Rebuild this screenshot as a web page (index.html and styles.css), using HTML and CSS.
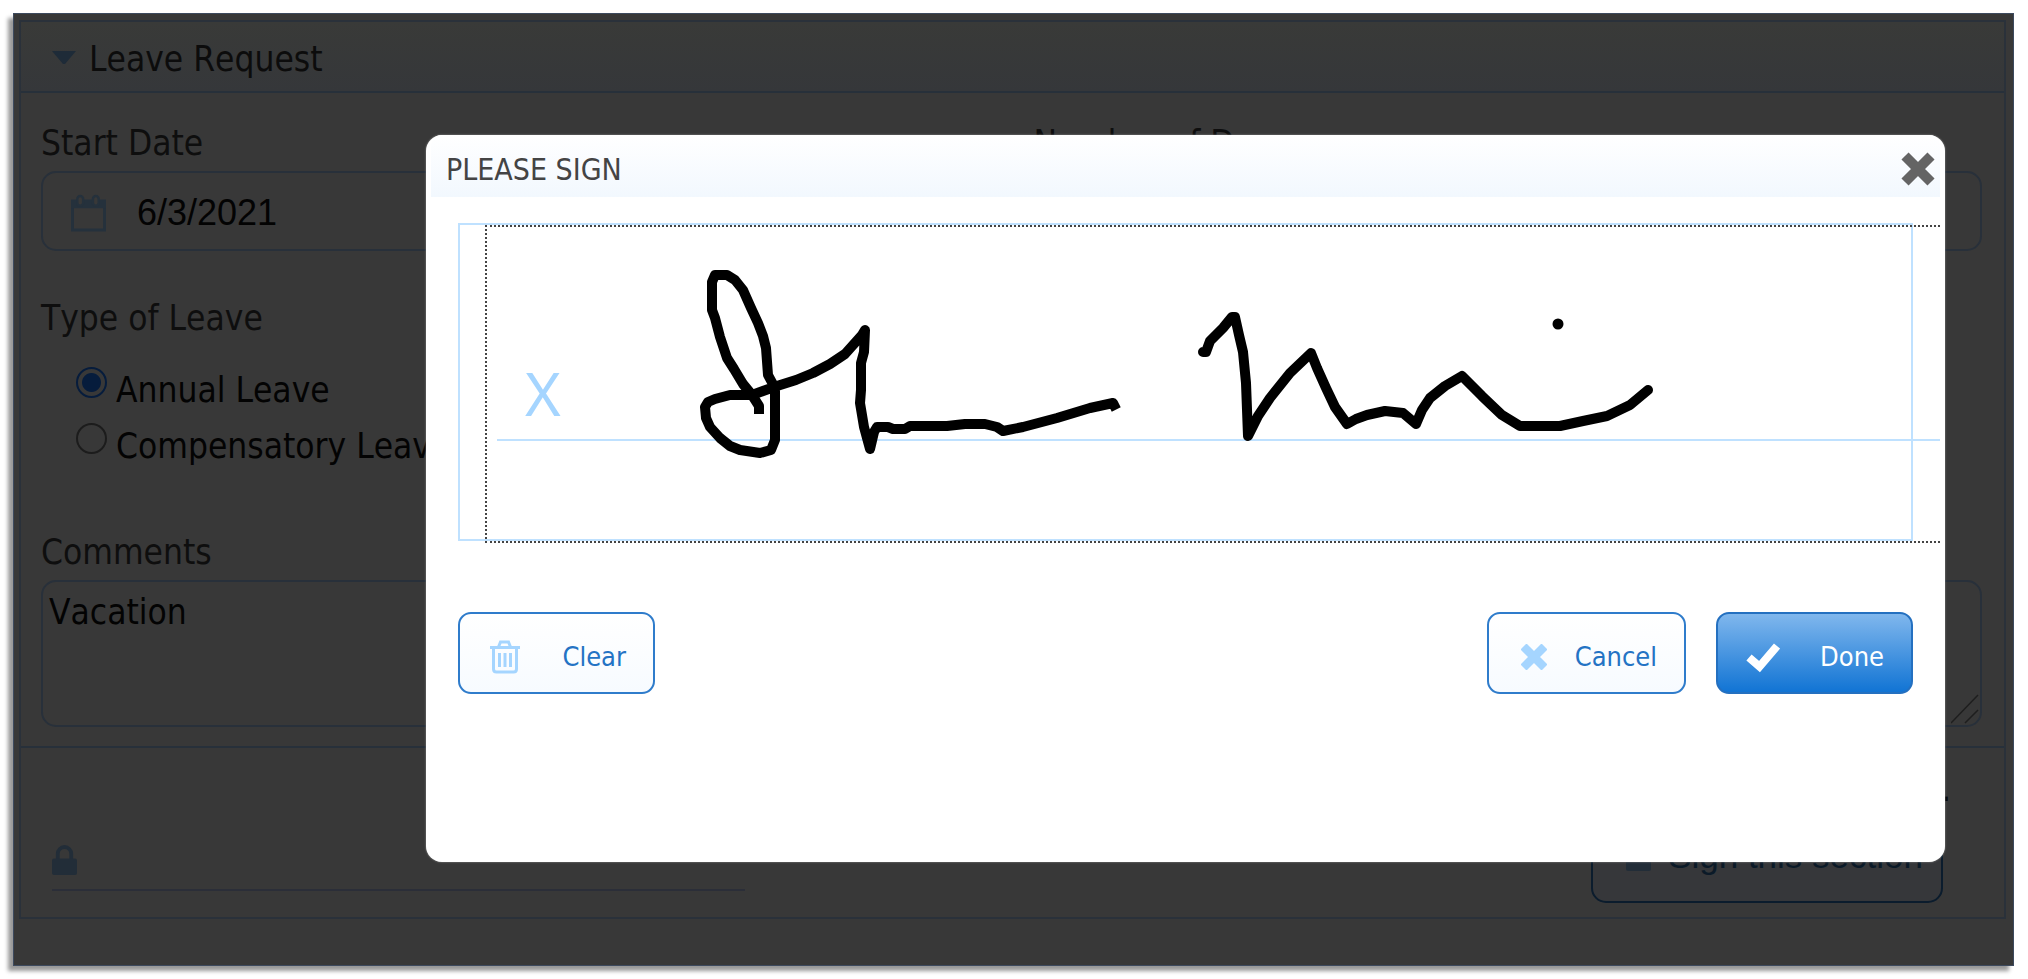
FILE: index.html
```html
<!DOCTYPE html>
<html lang="en">
<head>
<meta charset="utf-8">
<title>Leave Request</title>
<link rel="stylesheet" href="styles.css">
</head>
<body>
<div class="frame">
  <form class="section">
    <header class="section-header">
      <svg class="caret" viewBox="0 0 26 14" aria-hidden="true"><path d="M1 0h24L14 13h-2z" fill="currentColor"/></svg>
      <h1 class="section-title">Leave Request</h1>
    </header>

    <div class="section-body">
      <div class="columns">
        <div class="field">
          <label class="label" for="start">Start Date</label>
          <div class="control">
            <svg class="calendar" viewBox="0 0 36 38" aria-hidden="true">
              <path d="M1.500 6v30.500h33V6" fill="none" stroke="currentColor" stroke-width="3"/>
              <path d="M0 5h36v9H0z" fill="currentColor"/>
              <rect x="6.500" y="1.500" width="6" height="10" rx="3" fill="#383838" stroke="currentColor" stroke-width="2.500"/>
              <rect x="22.500" y="1.500" width="6" height="10" rx="3" fill="#383838" stroke="currentColor" stroke-width="2.500"/>
            </svg>
            <input class="input" id="start" type="text" value="6/3/2021">
          </div>
        </div>
        <div class="field">
          <label class="label" for="days">Number of Days</label>
          <div class="control"><input class="input" id="days" type="text"></div>
        </div>
      </div>

      <fieldset class="choices">
        <legend class="label">Type of Leave</legend>
        <label class="choice"><input class="radio" type="radio" name="type" checked>Annual Leave</label>
        <label class="choice"><input class="radio" type="radio" name="type">Compensatory Leave</label>
      </fieldset>

      <div class="comments-field">
        <label class="label" for="comments">Comments</label>
        <textarea class="comments" id="comments">Vacation</textarea>
        <svg class="grip" viewBox="0 0 28 30" aria-hidden="true"><path d="M0 29L27 1M14 29L27 16" stroke="currentColor" stroke-width="1.500"/></svg>
      </div>
    </div>

    <footer class="section-footer">
      <div class="signed">
        <svg class="lock" viewBox="0 0 26 31" aria-hidden="true"><path d="M6 15V9a7 7 0 0 1 14 0v6" fill="none" stroke="currentColor" stroke-width="4"/><rect y="14" width="26" height="17" rx="2" fill="currentColor"/></svg>
      </div>
      <div class="sign">
        <p class="sign-note">.</p>
        <button class="sign-button" type="button">
          <svg class="lock" viewBox="0 0 26 31" aria-hidden="true"><path d="M6 15V9a7 7 0 0 1 14 0v6" fill="none" stroke="currentColor" stroke-width="4"/><rect y="14" width="26" height="17" rx="2" fill="currentColor"/></svg>
          Sign this section
        </button>
      </div>
    </footer>
  </form>

  <div class="overlay">
    <section class="modal" role="dialog" aria-labelledby="modal-title">
      <header class="modal-header">
        <h2 class="modal-title" id="modal-title">PLEASE SIGN</h2>
        <button class="close" type="button" aria-label="Close">
          <svg class="close-icon" viewBox="0 0 34 34" aria-hidden="true"><path d="M4 4l26 26M30 4L4 30" stroke="currentColor" stroke-width="10"/></svg>
        </button>
      </header>
      <div class="modal-body">
        <div class="pad">
          <div class="canvas">
            <div class="baseline">X</div>
            <svg class="ink" viewBox="487 227 1200 314" role="img" aria-label="Signature">
              <g fill="none" stroke="#000" stroke-width="10" stroke-linejoin="round" stroke-linecap="square">
                <path d="M759 409V406L752 395 743 384 734 369 727 358 720 337 715 318 712 310V282L715 275H727L735 280 743 290 751 308 758 323 763 336 766 348 768 375 775 388V440L771 450 760 453 740 450 730 446 720 438 710 427 706 418 705 407 708 402 715 399 730 395H752L777 386 796 380 813 373 830 364 845 354 862 335 865 330 864 352 861 363V390L860 403 864 427 870 449 874 432 877 427H888L893 429H905L910 426H947L965 424H985L997 427 1003 431 1023 427 1057 418 1090 408 1113 403 1114 405"/>
                <path stroke-linecap="round" d="M1203 352H1206L1210 341 1223 328 1232 317H1235L1239 335 1243 352 1246 383 1248 436 1258 416 1270 398 1290 373 1311 353 1317 368 1326 388 1335 407 1347 424 1356 419 1367 415 1385 411 1403 413 1416 424 1422 410 1430 398 1445 386 1462 376 1482 396 1502 415 1520 426H1560L1583 421 1607 416 1630 405 1648 390"/>
              </g>
              <circle cx="1558" cy="324" r="5.500"/>
            </svg>
          </div>
        </div>
        <div class="actions">
          <button class="button button-clear" type="button">
            <svg class="icon" viewBox="0 0 32 34" aria-hidden="true">
              <g fill="none" stroke="currentColor" stroke-width="3"><path d="M1 7.500h30M9.500 7l2-5h8l2 5M4.500 8v21q0 3 3 3h17q3 0 3-3V8"/><path d="M10.500 13v14M16 13v14M21.500 13v14"/></g>
            </svg>
            Clear
          </button>
          <div class="confirm">
            <button class="button button-cancel" type="button">
              <svg class="icon icon-cross" viewBox="0 0 26 26" aria-hidden="true"><path d="M5.500 5.500l15 15M20.500 5.500l-15 15" stroke="currentColor" stroke-width="8.500" stroke-linecap="square" stroke-linejoin="round"/></svg>
              Cancel
            </button>
            <button class="button button-done" type="button">
              <svg class="icon" viewBox="0 0 34 28" aria-hidden="true"><path d="M3 14.500l10.500 9L31 3" fill="none" stroke="currentColor" stroke-width="8"/></svg>
              Done
            </button>
          </div>
        </div>
      </div>
    </section>
  </div>
</div>
</body>
</html>
```
FILE: styles.css
```css
* { box-sizing: border-box; }

body {
  margin: 0;
  padding: 13px 14px 13px 13px;
  background: #fff;
  font-family: "DejaVu Sans Condensed", "Noto Sans", sans-serif;
  font-size: 35px;
  font-kerning: none;
  line-height: 40px;
}

button, input, textarea { font: inherit; font-kerning: none; margin: 0; }

.frame {
  position: relative;
  min-height: calc(100vh - 26px);
  padding: 6px 7px 6px 5px;
  border: 1px solid #3d4a5e;
  background: #383838;
  box-shadow: -5px 5px 4px rgba(0, 0, 0, .4);
}

.section { border: 2px solid #2a313a; }

.section-header {
  display: flex;
  align-items: flex-start;
  gap: 12px;
  padding: 17px 30px 12px;
  border-bottom: 2px solid #27303a;
  background: linear-gradient(#393a38, #35373a);
}

.caret { width: 26px; height: 14px; margin-top: 12px; color: #1e2b38; }

.section-title { margin: 0; font-size: 35px; font-weight: 400; color: #0c0c0c; }

.section-body { padding: 30px 22px 19px 20px; }

.columns { display: grid; grid-template-columns: 1fr 1fr; gap: 44px; }

.label { display: block; padding: 0; color: #0e0e0e; }

.control {
  display: flex;
  align-items: center;
  gap: 31px;
  height: 80px;
  margin-top: 8px;
  padding: 4px 28px 0;
  border: 2px solid #28303a;
  border-radius: 15px;
}

.calendar { flex: none; width: 35px; height: 38px; color: #25313c; }

.input {
  flex: 1;
  min-width: 0;
  padding: 0;
  border: 0;
  outline: 0;
  background: none;
  color: #030303;
  font-family: "Liberation Sans", Arial, sans-serif;
  font-size: 36px;
}

.choices { margin: 47px 0 0; padding: 0; border: 0; }

.choices .label { margin-bottom: 24px; }

.choice { display: flex; gap: 9px; padding: 8px 0 8px 35px; color: #030303; }

.radio {
  appearance: none;
  flex: none;
  width: 31px;
  height: 31px;
  margin-top: -3px;
  border: 2px solid #1c1c1c;
  border-radius: 50%;
}

.radio:checked {
  border-color: #061c3c;
  background: radial-gradient(circle, #061c3c 9px, transparent 10px);
}

.comments-field { position: relative; margin-top: 58px; }

.comments {
  display: block;
  width: 100%;
  height: 147px;
  margin-top: 8px;
  padding: 10px 6px;
  border: 2px solid #28303a;
  border-radius: 15px;
  outline: 0;
  resize: none;
  background: none;
  color: #030303;
}

.grip { position: absolute; right: 3px; bottom: 3px; width: 28px; height: 30px; color: #1e1e1e; }

.section-footer {
  display: flex;
  justify-content: space-between;
  padding: 21px 53px 14px 31px;
  border-top: 2px solid #27303a;
}

.signed {
  width: 693px;
  padding: 76px 0 14px;
  align-self: flex-start;
  border-bottom: 2px solid #2b2e38;
  line-height: 0;
}

.lock { flex: none; width: 25px; height: 30px; color: #222d38; }

.sign { display: flex; flex-direction: column; align-items: flex-end; gap: 2px; }

.sign-note { margin: 0; color: #030303; }

.sign-button {
  display: flex;
  align-items: center;
  gap: 17px;
  height: 92px;
  margin-right: 8px;
  padding: 0 18px 2px 33px;
  border: 2px solid #0b1c2d;
  border-radius: 15px;
  background: #36373a;
  color: #0b1a28;
  font-family: "Liberation Sans", Arial, sans-serif;
  font-size: 35px;
}

.overlay {
  position: absolute;
  inset: 0;
  display: flex;
  align-items: flex-start;
  padding: 121px 68px 0 412px;
}

.modal {
  flex: 1;
  min-height: 727px;
  padding: 0 5px;
  border-radius: 16px;
  background: #fff;
  box-shadow: 0 0 2px #999;
}

.modal-header {
  display: flex;
  align-items: center;
  justify-content: space-between;
  height: 62px;
  padding: 5px 5px 0 15px;
  border-radius: 11px 11px 0 0;
  background: linear-gradient(#fff, #f2f8fe);
}

.modal-title { margin: 0; padding-top: 2px; font-size: 30px; font-weight: 400; color: #444; }

.close { padding: 0; border: 0; background: none; color: #646464; line-height: 0; }

.close-icon { width: 34px; height: 34px; }

.modal-body { padding: 26px 27px 0; overflow: hidden; }

.pad { position: relative; height: 318px; border: 2px solid #bfe1ff; }

.canvas {
  position: absolute;
  inset: 0 -29px auto 25px;
  height: 318px;
  border: 2px dotted #444;
  border-right: 0;
}

.baseline {
  height: 214px;
  margin-left: 10px;
  padding: 131px 0 0 28px;
  border-bottom: 2px solid #bfe1ff;
  color: #a5d5ff;
  font-family: "Noto Sans", sans-serif;
  font-size: 61px;
  line-height: 70px;
}

.ink { position: absolute; top: 0; left: 0; width: 1200px; height: 314px; }

.actions { display: flex; justify-content: space-between; margin-top: 71px; }

.confirm { display: flex; gap: 30px; }

.button {
  display: flex;
  align-items: center;
  justify-content: space-between;
  width: 197px;
  height: 82px;
  padding: 8px 27px 0 30px;
  border: 2px solid #2f7ccb;
  border-radius: 13px;
  background: linear-gradient(#fff, #f7fbff);
  color: #2473c4;
  font-size: 27px;
}

.button-clear { padding-left: 28px; }

.button-cancel { width: 199px; padding-left: 32px; }

.button-done {
  padding-left: 28px;
  border-color: #2470c0;
  background: linear-gradient(#80b7ed, #1174d4);
  color: #fff;
}

.icon { width: 34px; height: 34px; color: #a5d5ff; }

.icon-cross { width: 26px; height: 26px; }

.button-done .icon { color: #fff; }
```
